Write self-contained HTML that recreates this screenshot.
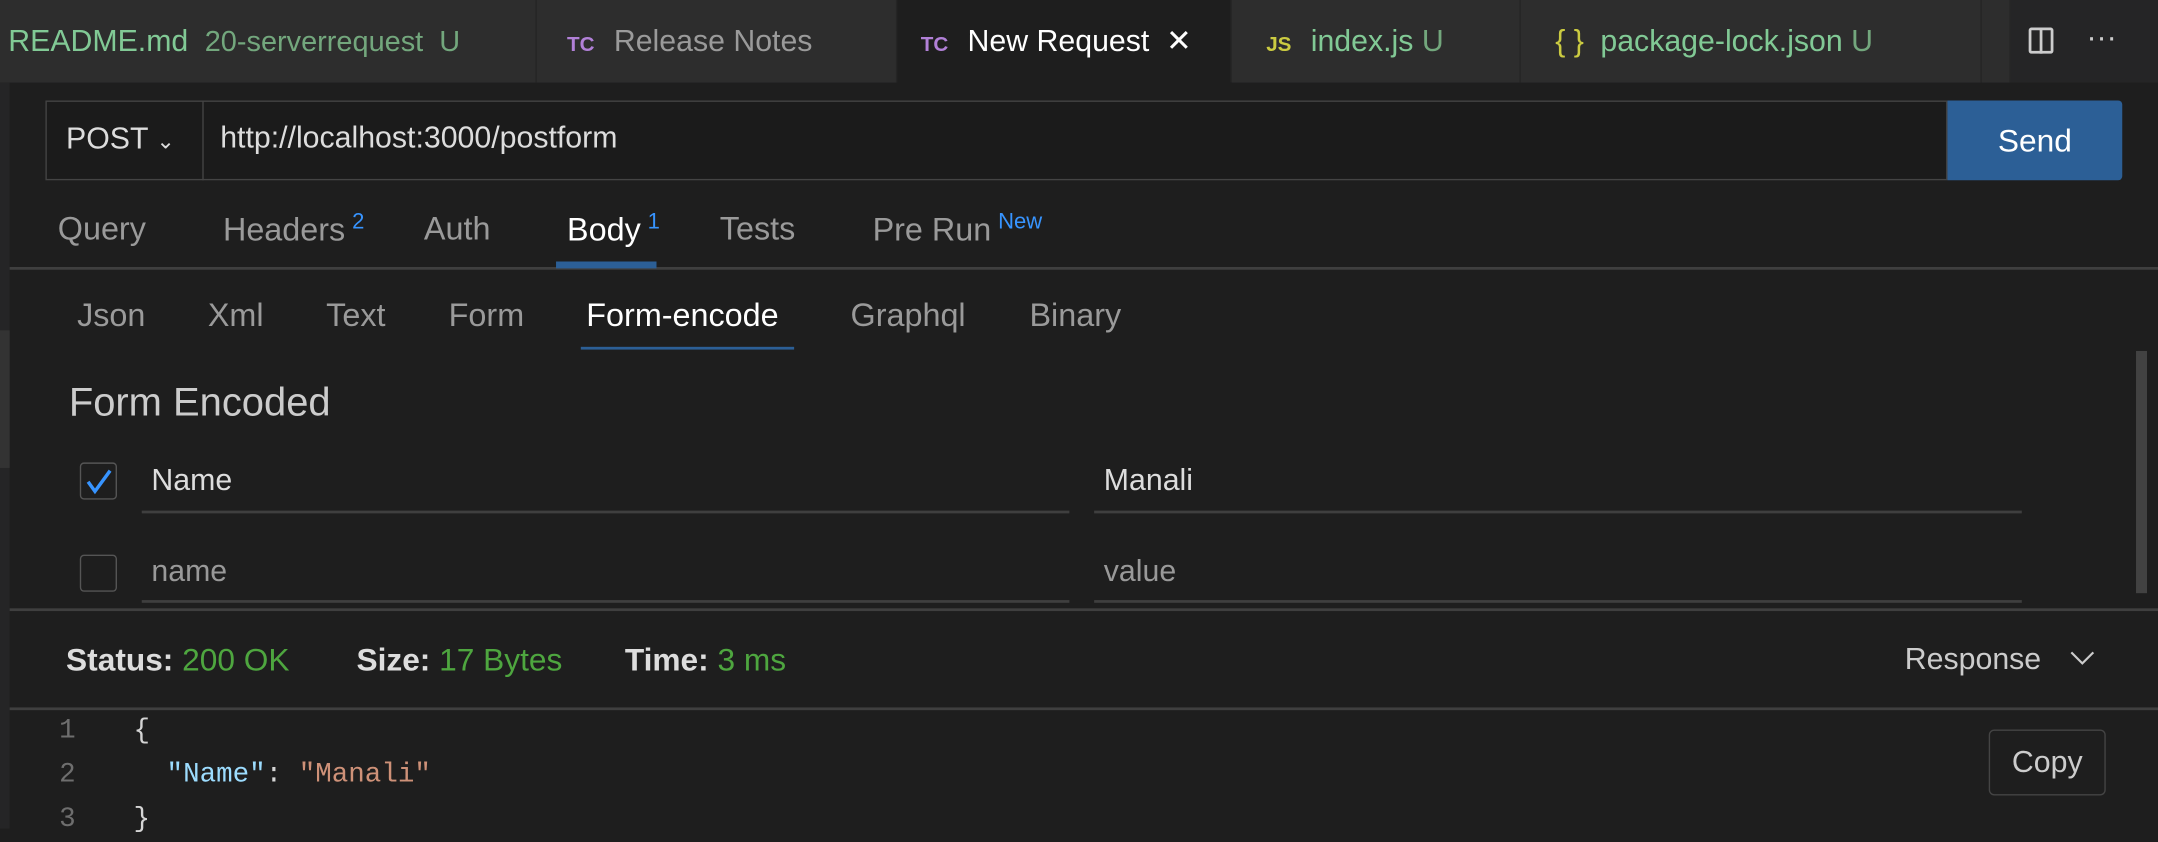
<!DOCTYPE html>
<html><head><meta charset="utf-8"><style>
html,body{margin:0;padding:0;background:#1e1e1e;width:2158px;height:829px;overflow:hidden}
#w{position:absolute;left:0;top:0;width:1568px;height:602px;transform:scale(1.3763);transform-origin:0 0;font-family:"Liberation Sans",sans-serif;color:#ccc}
.a{position:absolute;white-space:nowrap}
.tab{position:absolute;top:0;height:60px;background:#2d2d2d;border-right:1px solid #252525;font-size:22px;line-height:60px}
.tc{color:#b180d7;font-weight:bold;font-size:15px;margin-right:14px}
.line{position:absolute;height:2px;background:#3f3f3f}
.t1{font-size:23.5px;color:#9a9a9a}
</style></head><body><div id="w">
<div class="a" style="left:0;top:0;width:1568px;height:60px;background:#252526"></div>
<div class="tab" style="left:0;width:390px;padding-left:6px;box-sizing:border-box;color:#81c995">README.md <span style="color:#73a77d;font-size:21px">&nbsp;20-serverrequest&nbsp; U</span></div>
<div class="tab" style="left:390px;width:262px;padding-left:22px;box-sizing:border-box;color:#9a9a9a"><span class="tc">TC</span>Release Notes</div>
<div class="tab" style="left:652px;width:243px;padding-left:17px;box-sizing:border-box;background:#1e1e1e;color:#fff"><span class="tc">TC</span>New Request&nbsp; ✕</div>
<div class="tab" style="left:895px;width:210px;padding-left:25px;box-sizing:border-box;color:#81c995"><span class="tc" style="color:#cbcb41">JS</span>index.js <span style="color:#73a77d">U</span></div>
<div class="tab" style="left:1105px;width:335px;padding-left:25px;box-sizing:border-box;color:#81c995"><span style="color:#cbcb41;margin-right:12px">{ }</span>package-lock.json <span style="color:#73a77d">U</span></div>
<div class="tab" style="left:1440px;width:20px;background:#2d2d2d"></div>
<div class="a" style="left:1474px;top:20px;width:18px;height:19px;border:2px solid #ccc;border-radius:2px;box-sizing:border-box"></div>
<div class="a" style="left:1482px;top:20px;width:2px;height:19px;background:#ccc"></div>
<div class="a" style="left:1516px;top:14px;font-size:22px;color:#ccc">···</div>
<div class="a" style="left:0;top:60px;width:7px;height:542px;background:#252526"></div>
<div class="a" style="left:0;top:240px;width:7px;height:100px;background:#333"></div>

<div class="a" style="left:33px;top:73px;width:1382px;height:58px;border:1px solid #444;box-sizing:border-box;background:#1b1b1b"></div>
<div class="a" style="left:147px;top:73px;width:1px;height:58px;background:#444"></div>
<div class="a" style="left:48px;top:88px;font-size:22px;color:#ddd">POST <span style="font-size:16px">&#8964;</span></div>
<div class="a" style="left:160px;top:87px;font-size:22px;color:#ddd">http://localhost:3000/postform</div>
<div class="a" style="left:1415px;top:73px;width:127px;height:58px;background:#2c5f96;border-radius:0 3px 3px 0;color:#fff;font-size:23px;line-height:58px;text-align:center">Send</div>

<div class="a t1" style="left:42px;top:153px">Query</div>
<div class="a t1" style="left:162px;top:153px">Headers<sup style="color:#3794ff;font-size:16px;margin-left:5px">2</sup></div>
<div class="a t1" style="left:308px;top:153px">Auth</div>
<div class="a t1" style="left:412px;top:153px;color:#fff">Body<sup style="color:#3794ff;font-size:16px;margin-left:5px">1</sup></div>
<div class="a t1" style="left:523px;top:153px">Tests</div>
<div class="a t1" style="left:634px;top:153px">Pre Run<sup style="color:#3794ff;font-size:16px;margin-left:5px">New</sup></div>
<div class="line" style="left:7px;top:194px;width:1561px"></div>
<div class="a" style="left:404px;top:190px;width:73px;height:5px;background:#2c5f96"></div>

<div class="a t1" style="left:56px;top:216px">Json</div>
<div class="a t1" style="left:151px;top:216px">Xml</div>
<div class="a t1" style="left:237px;top:216px">Text</div>
<div class="a t1" style="left:326px;top:216px">Form</div>
<div class="a t1" style="left:426px;top:216px;color:#fff">Form-encode</div>
<div class="a t1" style="left:618px;top:216px">Graphql</div>
<div class="a t1" style="left:748px;top:216px">Binary</div>
<div class="a" style="left:422px;top:252px;width:155px;height:2px;background:#2c5f96"></div>

<div class="a" style="left:50px;top:277px;font-size:29px;color:#ccc">Form Encoded</div>
<div class="a" style="left:58px;top:336px;width:27px;height:27px;border:1.5px solid #555;border-radius:3px;box-sizing:border-box"></div>
<svg class="a" style="left:61px;top:339px" width="22" height="22" viewBox="0 0 22 22"><path d="M3 11 L8 18 L19 3" stroke="#3794ff" stroke-width="2.5" fill="none"/></svg>
<div class="a" style="left:110px;top:336px;font-size:22px;color:#ddd">Name</div>
<div class="a" style="left:802px;top:336px;font-size:22px;color:#ddd">Manali</div>
<div class="line" style="left:103px;top:371px;width:674px"></div>
<div class="line" style="left:795px;top:371px;width:674px"></div>
<div class="a" style="left:58px;top:403px;width:27px;height:27px;border:1.5px solid #555;border-radius:3px;box-sizing:border-box"></div>
<div class="a" style="left:110px;top:402px;font-size:22px;color:#999">name</div>
<div class="a" style="left:802px;top:402px;font-size:22px;color:#999">value</div>
<div class="line" style="left:103px;top:436px;width:674px"></div>
<div class="line" style="left:795px;top:436px;width:674px"></div>
<div class="a" style="left:1552px;top:255px;width:8px;height:176px;background:#424242"></div>
<div class="line" style="left:7px;top:442px;width:1561px"></div>

<div class="a" style="left:48px;top:466px;font-size:23px;color:#ddd;font-weight:bold">Status: <span style="color:#4ea63f;font-weight:normal">200 OK</span></div>
<div class="a" style="left:259px;top:466px;font-size:23px;color:#ddd;font-weight:bold">Size: <span style="color:#4ea63f;font-weight:normal">17 Bytes</span></div>
<div class="a" style="left:454px;top:466px;font-size:23px;color:#ddd;font-weight:bold">Time: <span style="color:#4ea63f;font-weight:normal">3 ms</span></div>
<div class="a" style="left:1384px;top:466px;font-size:22px;color:#ccc">Response</div>
<svg class="a" style="left:1503px;top:471px" width="20" height="14"><path d="M2 3 L10 11 L18 3" stroke="#ccc" stroke-width="1.6" fill="none"/></svg>
<div class="line" style="left:7px;top:514px;width:1561px"></div>

<div class="a" style="left:41px;top:516px;font-family:'Liberation Mono',monospace;font-size:20px;line-height:32px;color:#6e6e6e;text-align:right;width:14px">1<br>2<br>3</div>
<div class="a" style="left:97px;top:516px;font-family:'Liberation Mono',monospace;font-size:20px;line-height:32px;color:#d4d4d4">{<br>&nbsp;&nbsp;<span style="color:#9cdcfe">"Name"</span>: <span style="color:#ce9178">"Manali"</span><br>}</div>
<div class="a" style="left:1445px;top:530px;width:85px;height:48px;border:1px solid #444;border-radius:4px;box-sizing:border-box;font-size:22px;line-height:46px;text-align:center;color:#ccc">Copy</div>
</div></body></html>
